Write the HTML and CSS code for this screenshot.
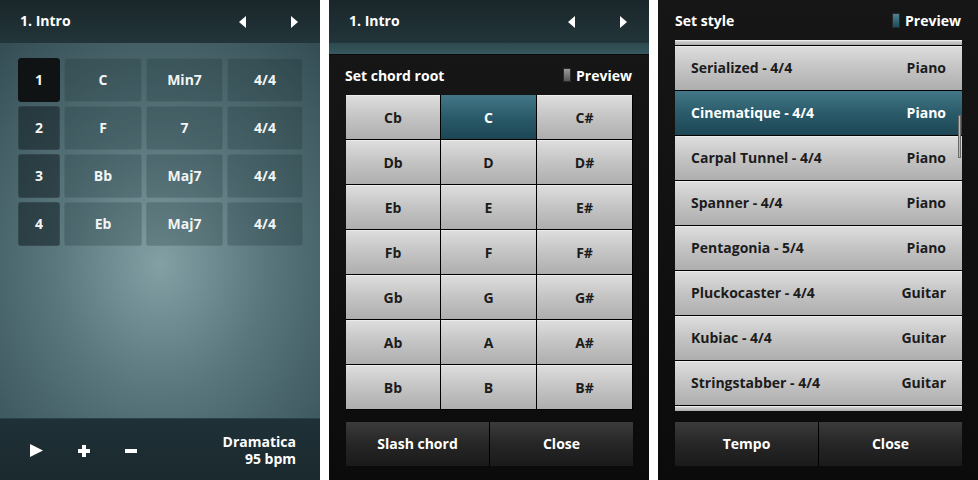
FILE: index.html
```html
<!DOCTYPE html>
<html lang="en">
<head>
    <meta charset="UTF-8">
    <meta name="viewport" content="width=device-width, initial-scale=1.0">
    <title>Chord Screens</title>
    <link rel="stylesheet" href="styles.css">
</head>
<body>
    <div class="screens">
        <!-- song editor -->
        <div class="screen editor">
            <div class="topbar">
                <span class="title">1. Intro</span>
                <div class="arrows">
                    <svg width="7" height="12" viewBox="0 0 7 12"><path d="M7 0 L0 6 L7 12 Z" fill="#fff"/></svg>
                    <svg width="7" height="12" viewBox="0 0 7 12"><path d="M0 0 L7 6 L0 12 Z" fill="#fff"/></svg>
                </div>
            </div>
            <div class="bars">
                <div class="cell num active">1</div><div class="cell">C</div><div class="cell">Min7</div><div class="cell">4/4</div>
                <div class="cell num">2</div><div class="cell">F</div><div class="cell">7</div><div class="cell">4/4</div>
                <div class="cell num">3</div><div class="cell">Bb</div><div class="cell">Maj7</div><div class="cell">4/4</div>
                <div class="cell num">4</div><div class="cell">Eb</div><div class="cell">Maj7</div><div class="cell">4/4</div>
            </div>
            <div class="footer">
                <div class="controls">
                    <svg width="13" height="13" viewBox="0 0 13 13"><path d="M0 0 L13 6.5 L0 13 Z" fill="#fff"/></svg>
                    <svg width="12" height="12" viewBox="0 0 12 12"><path d="M4 0 H8 V4 H12 V8 H8 V12 H4 V8 H0 V4 H4 Z" fill="#fff"/></svg>
                    <svg width="12" height="4" viewBox="0 0 12 4"><rect width="12" height="4" fill="#fff"/></svg>
                </div>
                <div class="style-info">
                    <div>Dramatica</div>
                    <div>95 bpm</div>
                </div>
            </div>
        </div>

        <!-- chord root dialog -->
        <div class="screen">
            <div class="topbar">
                <span class="title">1. Intro</span>
                <div class="arrows">
                    <svg width="7" height="12" viewBox="0 0 7 12"><path d="M7 0 L0 6 L7 12 Z" fill="#fff"/></svg>
                    <svg width="7" height="12" viewBox="0 0 7 12"><path d="M0 0 L7 6 L0 12 Z" fill="#fff"/></svg>
                </div>
            </div>
            <div class="peek"></div>
            <div class="dialog">
                <div class="dialog-head">
                    <span>Set chord root</span>
                    <span class="preview"><i class="led"></i>Preview</span>
                </div>
                <div class="roots">
                    <div class="key">Cb</div><div class="key on">C</div><div class="key">C#</div>
                    <div class="key">Db</div><div class="key">D</div><div class="key">D#</div>
                    <div class="key">Eb</div><div class="key">E</div><div class="key">E#</div>
                    <div class="key">Fb</div><div class="key">F</div><div class="key">F#</div>
                    <div class="key">Gb</div><div class="key">G</div><div class="key">G#</div>
                    <div class="key">Ab</div><div class="key">A</div><div class="key">A#</div>
                    <div class="key">Bb</div><div class="key">B</div><div class="key">B#</div>
                </div>
                <div class="buttons">
                    <button>Slash chord</button>
                    <button>Close</button>
                </div>
            </div>
        </div>

        <!-- style dialog -->
        <div class="screen">
            <div class="dialog full">
                <div class="dialog-head">
                    <span>Set style</span>
                    <span class="preview"><i class="led lit"></i>Preview</span>
                </div>
                <div class="styles">
                    <div class="row stub"></div>
                    <div class="row"><span>Serialized - 4/4</span><span>Piano</span></div>
                    <div class="row on"><span>Cinematique - 4/4</span><span>Piano</span></div>
                    <div class="row"><span>Carpal Tunnel - 4/4</span><span>Piano</span></div>
                    <div class="row"><span>Spanner - 4/4</span><span>Piano</span></div>
                    <div class="row"><span>Pentagonia - 5/4</span><span>Piano</span></div>
                    <div class="row"><span>Pluckocaster - 4/4</span><span>Guitar</span></div>
                    <div class="row"><span>Kubiac - 4/4</span><span>Guitar</span></div>
                    <div class="row"><span>Stringstabber - 4/4</span><span>Guitar</span></div>
                    <div class="row stub"></div>
                    <div class="scrollbar"></div>
                </div>
                <div class="buttons">
                    <button>Tempo</button>
                    <button>Close</button>
                </div>
            </div>
        </div>
    </div>
</body>
</html>
```

FILE: styles.css
```css
body {
    margin: 0;
    background: #fff;
    font-family: "Open Sans", "DejaVu Sans", sans-serif;
    font-weight: bold;
    font-size: 14px;
    color: #fff;
}
.screens {
    display: flex;
    gap: 9px;
}
.screen {
    width: 320px;
    height: 480px;
    display: flex;
    flex-direction: column;
    overflow: hidden;
    background: radial-gradient(ellipse 75% 60% at 50% 55%, #83a0a5 0%, #58767c 45%, #354e55 100%);
}
.topbar {
    height: 43px;
    flex: none;
    display: flex;
    align-items: center;
    justify-content: space-between;
    padding: 0 22px 2px 20px;
    box-sizing: border-box;
    background: linear-gradient(#1a2629, #22353a);
}
.arrows {
    display: flex;
    gap: 45px;
    padding-top: 2px;
}
.arrows svg {
    display: block;
}

/* editor grid */
.bars {
    display: grid;
    grid-template-columns: 42px 78px 77px 76px;
    grid-auto-rows: 44px;
    gap: 4px;
    margin: 15px 0 0 18px;
}
.cell {
    display: flex;
    align-items: center;
    justify-content: center;
    padding-bottom: 2px;
    box-sizing: border-box;
    border-radius: 3px;
    border: 1px solid rgba(255, 255, 255, 0.05);
    background: rgba(20, 40, 45, 0.24);
    color: #f2f5f5;
}
.cell.num {
    background: rgba(15, 28, 32, 0.55);
}
.cell.num.active {
    background: #0f1314;
    border-color: #0f1314;
}
.footer {
    margin-top: auto;
    height: 61px;
    display: flex;
    align-items: center;
    justify-content: space-between;
    padding: 0 24px 0 30px;
    background: linear-gradient(#1f3137, #1a292e);
    border-top: 1px solid #2b4148;
}
.controls {
    display: flex;
    align-items: center;
    gap: 35px;
    padding-top: 2px;
}
.controls svg {
    display: block;
}
.style-info {
    text-align: right;
    line-height: 17px;
}

/* dialogs */
.peek {
    height: 11px;
    flex: none;
    background: linear-gradient(#2d4a50, #36585e);
    border-bottom: 1px solid #0a0a0a;
}
.dialog {
    flex: 1;
    display: flex;
    flex-direction: column;
    padding: 0 16px 14px 17px;
    background: linear-gradient(#161616, #0b0b0b);
}
.dialog-head {
    height: 40px;
    flex: none;
    display: flex;
    align-items: center;
    justify-content: space-between;
    padding-right: 1px;
}
.dialog .dialog-head {
    margin-left: -1px;
}
.dialog.full .dialog-head {
    margin-left: 0;
}
.preview {
    display: flex;
    align-items: center;
    gap: 5px;
}
.led {
    width: 8px;
    height: 14px;
    flex: none;
    background: linear-gradient(#9a9a9a, #555);
    border: 1px solid #2a2a2a;
    box-sizing: border-box;
}
.led.lit {
    height: 15px;
    background: linear-gradient(#4a8494, #1c4c5a);
}
.roots {
    display: grid;
    grid-template-columns: 94px 95px 95px;
    grid-auto-rows: 44px;
    gap: 1px;
    background: #000;
    border-bottom: 1px solid #000;
}
.key, .row {
    display: flex;
    align-items: center;
    color: #1c1c1c;
    background: linear-gradient(#dedede, #c4c4c4 50%, #aeaeae);
    box-shadow: inset 0 1px 0 #ececec;
}
.key {
    justify-content: center;
}
.key.on, .row.on {
    color: #fff;
    background: linear-gradient(#437787, #2a5b6a 50%, #1c4654);
    box-shadow: none;
}
.buttons {
    margin-top: auto;
    height: 44px;
    display: flex;
    gap: 1px;
    background: #000;
}
.buttons button {
    flex: 1;
    border: none;
    padding: 0 0 2px;
    font: inherit;
    color: #fff;
    background: linear-gradient(#3b3b3b, #262626 50%, #1a1a1a);
}
.styles {
    position: relative;
    display: flex;
    flex-direction: column;
    gap: 1px;
    background: #000;
}
.row {
    height: 44px;
    flex: none;
    justify-content: space-between;
    padding: 0 16px 2px;
    box-sizing: border-box;
}
.row.stub {
    height: 5px;
    padding: 0;
}
.scrollbar {
    position: absolute;
    right: 1px;
    top: 75px;
    width: 3px;
    height: 43px;
    background: #b8b8b8;
    border: 1px solid #6a6a6a;
    box-sizing: border-box;
}
```
